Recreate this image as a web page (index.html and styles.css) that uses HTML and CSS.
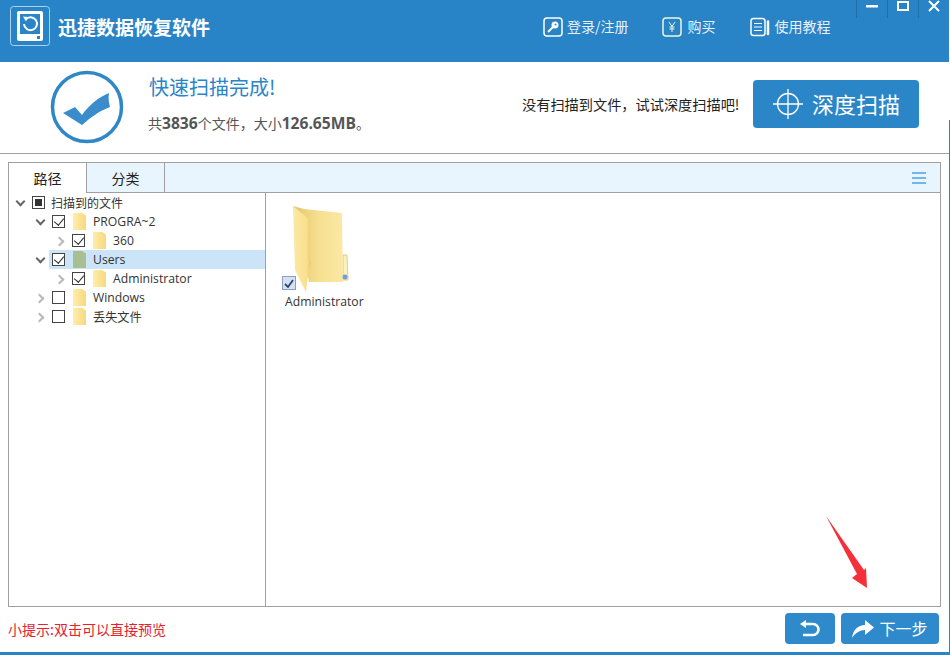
FILE: index.html
```html
<!DOCTYPE html>
<html lang="zh-CN">
<head>
<meta charset="utf-8">
<title>迅捷数据恢复软件</title>
<link rel="stylesheet" href="styles.css">
</head>
<body>
<div class="app">
  <header class="topbar">
    <svg class="logo" width="40" height="40" viewBox="0 0 40 40">
      <rect x=".5" y=".5" width="39" height="39" rx="3" fill="none" stroke="#a9d3f0"/>
      <path d="M9 5h22a2 2 0 0 1 2 2v26a2 2 0 0 1-2 2H9a2 2 0 0 1-2-2V7a2 2 0 0 1 2-2z" fill="#fff"/>
      <rect x="10" y="8" width="20" height="20" fill="#2a84c8"/>
      <path d="M15.5 13.5A6.5 6.5 0 1 1 14 18" fill="none" stroke="#fff" stroke-width="2"/>
      <path d="M13 10.500l5 .5-2 4.500z" fill="#fff"/>
      <rect x="27" y="30" width="3" height="3" fill="#2a84c8"/>
    </svg>
    <div class="apptitle">迅捷数据恢复软件</div>
    <nav class="nav">
      <div class="navitem">
        <svg width="20" height="20" viewBox="0 0 20 20"><rect x="1" y="1" width="18" height="18" rx="3" fill="none" stroke="#fff" stroke-width="1.500"/><circle cx="12" cy="8" r="3.500" fill="#fff"/><path d="M10 10l-5 5" stroke="#fff" stroke-width="2"/><circle cx="12.500" cy="7.500" r="1" fill="#2a84c8"/></svg>
        <span>登录/注册</span>
      </div>
      <div class="navitem nav-buy">
        <svg width="20" height="20" viewBox="0 0 20 20"><rect x="1" y="1" width="18" height="18" rx="3" fill="none" stroke="#eaf7d8" stroke-width="1.500"/><path d="M7 5l3 4.500L13 5M10 9.500V15M7.500 10h5M7.500 12h5" fill="none" stroke="#eaf7d8"/></svg>
        <span>购买</span>
      </div>
      <div class="navitem nav-guide">
        <svg width="20" height="20" viewBox="0 0 20 20"><rect x="1" y="1.500" width="14" height="17" rx="2.500" fill="none" stroke="#fff" stroke-width="1.500"/><path d="M4 6.500h8M4 10h8M4 13.500h8" stroke="#fff"/><path d="M18 4.500V17" stroke="#fff" stroke-width="2.500" stroke-linecap="round"/></svg>
        <span>使用教程</span>
      </div>
    </nav>
    <div class="winctl">
      <div class="winbtn"><svg width="12" height="12" viewBox="0 0 12 12"><rect y="5" width="12" height="2.500" fill="#fff"/></svg></div>
      <div class="winbtn"><svg width="12" height="12" viewBox="0 0 12 12"><rect x="1" y="2" width="10" height="8" fill="none" stroke="#fff" stroke-width="2"/></svg></div>
      <div class="winbtn"><svg width="12" height="12" viewBox="0 0 12 12"><path d="M1 1l10 10M11 1L1 11" stroke="#fff" stroke-width="2"/></svg></div>
    </div>
  </header>

  <section class="summary">
    <svg class="okicon" width="76" height="76" viewBox="0 0 76 76">
      <circle cx="38" cy="38" r="34.500" fill="#fff" stroke="#2f87c6" stroke-width="3.500"/>
      <path d="M14 44L26 38L33 46C40 36 50 28 60 24C59 30 60 34 61 38C50 42 41 49 33 56z" fill="#3b8cca"/>
    </svg>
    <div class="sumtext">
      <div class="sumtitle">快速扫描完成!</div>
      <div class="sumsub">共<b>3836</b>个文件，大小<b>126.65MB</b>。</div>
    </div>
    <div class="sumhint">没有扫描到文件，试试深度扫描吧!</div>
    <button class="deepbtn">
      <svg width="32" height="32" viewBox="0 0 32 32"><circle cx="16" cy="16" r="10.500" fill="none" stroke="#fff" stroke-width="1.300"/><path d="M1 16h30M16 1v30" stroke="#fff" stroke-width="1.300"/></svg>
      <span>深度扫描</span>
    </button>
  </section>

  <main class="panel">
    <div class="tabs">
      <div class="tab tab-on">路径</div>
      <div class="tab">分类</div>
      <div class="tabfill">
        <svg width="14" height="12" viewBox="0 0 14 12"><path d="M0 1h14M0 6h14M0 11h14" stroke="#72b6ea" stroke-width="2"/></svg>
      </div>
    </div>
    <div class="panes">
      <div class="tree">
        <div class="row lv0"><span class="chev open"></span><span class="cb cb-mixed"></span><span class="lbl lbl0">扫描到的文件</span></div>
        <div class="row lv1"><span class="chev open"></span><span class="cb cb-on"></span><span class="fold"></span><span class="lbl">PROGRA~2</span></div>
        <div class="row lv2"><span class="chev"></span><span class="cb cb-on"></span><span class="fold"></span><span class="lbl">360</span></div>
        <div class="row lv1 selected"><span class="chev open"></span><span class="cb cb-on"></span><span class="fold fold-sel"></span><span class="lbl">Users</span></div>
        <div class="row lv2"><span class="chev"></span><span class="cb cb-on"></span><span class="fold"></span><span class="lbl">Administrator</span></div>
        <div class="row lv1"><span class="chev"></span><span class="cb"></span><span class="fold"></span><span class="lbl">Windows</span></div>
        <div class="row lv1"><span class="chev"></span><span class="cb"></span><span class="fold"></span><span class="lbl">丢失文件</span></div>
      </div>
      <div class="files">
        <div class="fileitem">
          <svg class="bigfolder" width="57" height="88" viewBox="0 0 57 88">
            <defs>
              <linearGradient id="fb" x1="0" y1="0" x2="1" y2="0"><stop offset="0" stop-color="#e3c46c"/><stop offset=".5" stop-color="#f7df90"/><stop offset="1" stop-color="#fbe8a4"/></linearGradient>
              <linearGradient id="ff" x1="0" y1="0" x2="1" y2="0"><stop offset="0" stop-color="#fbe9a4"/><stop offset=".75" stop-color="#f9e08e"/><stop offset="1" stop-color="#e8c86e"/></linearGradient>
            </defs>
            <path d="M51 50h4l1 25H42V71h9z" fill="#fbf0c0" stroke="#e0c26a" stroke-width=".8"/>
            <path d="M1 1L12 4L50 8L51 77H17z" fill="url(#fb)"/>
            <circle cx="53" cy="72" r="2.500" fill="#6f9fd8"/>
            <path d="M1 1L17 14L18 55L19 58L16 70L14 87L3 65z" fill="url(#ff)"/>
          </svg>
          <span class="itemcheck"><svg width="10" height="9" viewBox="0 0 10 9"><path d="M1 5l3 3 5-7" fill="none" stroke="#2d4a6e" stroke-width="1.800"/></svg></span>
          <span class="itemname">Administrator</span>
        </div>
      </div>
    </div>
  </main>

  <footer class="foot">
    <div class="tip">小提示:双击可以直接预览</div>
    <div class="footbtns">
      <button class="fbtn fbtn-back">
        <svg width="22" height="18" viewBox="0 0 22 18"><path d="M5 4h9a5.500 5.500 0 0 1 0 11H4" fill="none" stroke="#fff" stroke-width="2.600"/><path d="M1 4l6-4v8z" fill="#fff"/></svg>
      </button>
      <button class="fbtn fbtn-next">
        <svg width="22" height="18" viewBox="0 0 22 18"><path d="M0 18C1 10 6 5 13 5V0l9 7.500-9 7.500v-5C8 10 3 13 0 18z" fill="#fff"/></svg>
        <span>下一步</span>
      </button>
    </div>
  </footer>
  <div class="bottombar"></div>

  <svg class="redarrow" width="44" height="74" viewBox="0 0 44 74"><path d="M1 1L39 55L41 53L42 73L27 63L32 59z" fill="#f5303a"/></svg>
</div>
<div class="edge"></div>
</body>
</html>
```

FILE: styles.css
```css
* { box-sizing: border-box; }
html, body { margin: 0; height: 100%; }
body {
  width: 950px;
  height: 655px;
  overflow: hidden;
  display: flex;
  background: #fff;
  font-family: "Open Sans", "Noto Sans CJK SC", sans-serif;
  color: #333;
}
.app {
  position: relative;
  flex: 0 0 949px;
  height: 655px;
  display: flex;
  flex-direction: column;
}
.edge {
  flex: 1;
  background: linear-gradient(#fff 0, #fff 120px, #2a84c8 120px);
}

.topbar {
  flex: 0 0 62px;
  display: flex;
  align-items: flex-start;
  background: #2883c7;
  color: #fff;
  padding-left: 10px;
}
.logo { margin-top: 6px; }
.apptitle {
  margin: 12px 0 0 8px;
  font-size: 19px;
  line-height: 30px;
  font-weight: 700;
  font-family: "Noto Sans CJK SC", sans-serif;
}
.nav {
  display: flex;
  margin: 17px 0 0 333px;
}
.navitem {
  display: flex;
  align-items: center;
  gap: 4px;
  height: 20px;
  font-size: 14px;
  font-family: "Noto Sans CJK SC", sans-serif;
  color: #e6f2fb;
}
.navitem span { margin-top: -2px; }
.nav-buy { margin-left: 33px; gap: 6px; }
.nav-guide { margin-left: 34px; gap: 5px; }
.winctl {
  display: flex;
  margin-left: auto;
}
.winbtn {
  width: 31px;
  height: 18px;
  border-left: 1px solid #1f6ea8;
  display: flex;
  align-items: center;
  justify-content: center;
  padding-bottom: 8px;
  padding-top: 2px;
}

.summary {
  flex: 0 0 92px;
  display: flex;
  align-items: flex-start;
  border-bottom: 1px solid #a0a0a0;
  padding-left: 49px;
}
.okicon { margin-top: 7px; }
.sumtext { margin-left: 24px; width: 373px; }
.sumtitle {
  margin-top: 10px;
  font-size: 20px;
  line-height: 30px;
  color: #2a84c8;
  font-family: "Noto Sans CJK SC", sans-serif;
}
.sumsub {
  margin-top: 9px;
  margin-left: -1px;
  font-size: 14px;
  line-height: 24px;
  color: #555;
}
.sumsub b { font-size: 15.600px; }
.sumhint {
  margin-top: 32px;
  font-size: 14.200px;
  line-height: 20px;
  color: #222;
  font-family: "Noto Sans CJK SC", sans-serif;
  width: 231px;
}
.deepbtn {
  margin-top: 18px;
  width: 166px;
  height: 48px;
  border: 0;
  border-radius: 4px;
  background: #2b86c8;
  color: #fff;
  display: flex;
  align-items: center;
  padding: 0 0 0 19px;
  gap: 8px;
  font-size: 22px;
  font-family: "Noto Sans CJK SC", sans-serif;
}
.deepbtn span { margin-top: -3px; }

.panel {
  margin: 8px 0 0 8px;
  width: 933px;
  height: 445px;
  border: 1px solid #a0a0a0;
  display: flex;
  flex-direction: column;
}
.tabs {
  flex: 0 0 30px;
  display: flex;
  border-bottom: 1px solid #a0a0a0;
  background: #e8f4fe;
}
.tab {
  width: 78px;
  border-right: 1px solid #a0a0a0;
  display: flex;
  align-items: center;
  justify-content: center;
  font-size: 14px;
  font-family: "Noto Sans CJK SC", sans-serif;
  color: #222;
}
.tab-on {
  background: #fff;
  margin-bottom: -1px;
}
.tabfill {
  flex: 1;
  display: flex;
  align-items: center;
  justify-content: flex-end;
  padding-right: 14px;
}

.panes { flex: 1; display: flex; min-height: 0; }
.tree {
  width: 257px;
  border-right: 1px solid #a0a0a0;
}
.row {
  height: 19px;
  display: flex;
  align-items: center;
  font-size: 12px;
  color: #333;
}
.lv0 { padding-left: 6px; }
.lv1 { padding-left: 26px; }
.lv2 { padding-left: 46px; }
.selected {
  background: #cce4f7;
  margin-left: 40px;
  padding-left: 0;
  position: relative;
}
.selected .chev { position: absolute; left: -14px; }
.selected .cb { margin-left: 3px; }
.chev {
  flex: 0 0 10px;
  width: 10px;
  height: 10px;
  margin-right: 7px;
  position: relative;
}
.chev::before {
  content: "";
  position: absolute;
  left: 1px;
  top: 2px;
  width: 5px;
  height: 5px;
  border-right: 2px solid #b8b8b8;
  border-bottom: 2px solid #b8b8b8;
  transform: rotate(-45deg);
}
.chev.open::before {
  left: 2px;
  top: 0;
  border-color: #666;
  transform: rotate(45deg);
}
.cb {
  flex: 0 0 13px;
  width: 13px;
  height: 13px;
  border: 1px solid #444;
  background: #fff;
  position: relative;
}
.cb-on::after {
  content: "";
  position: absolute;
  left: 3px;
  top: 0;
  width: 5px;
  height: 8px;
  border-right: 1px solid #333;
  border-bottom: 1px solid #333;
  transform: rotate(40deg);
}
.cb-mixed::after {
  content: "";
  position: absolute;
  left: 2px;
  top: 2px;
  width: 7px;
  height: 7px;
  background: #333;
}
.fold {
  flex: 0 0 13px;
  width: 13px;
  height: 17px;
  margin-left: 8px;
  background: linear-gradient(90deg, #ffeeaa, #f7d880);
  clip-path: polygon(0 0, 70% 0, 100% 15%, 100% 100%, 0 100%);
}
.fold-sel { background: #a8bf93; }
.lbl { margin-left: 7px; font-size: 12.200px; }
.lbl0 { margin-left: 6px; font-size: 12px; }

.files { flex: 1; padding: 12px 0 0 16px; }
.fileitem {
  position: relative;
  width: 84px;
  display: flex;
  flex-direction: column;
  align-items: flex-start;
}
.bigfolder { margin-left: 10px; }
.itemcheck {
  position: absolute;
  left: 0;
  top: 71px;
  width: 14px;
  height: 14px;
  border: 1px solid #8aa0c0;
  background: #d6e0f2;
  display: flex;
  align-items: center;
  justify-content: center;
}
.itemname {
  margin: 0 0 0 3px;
  font-size: 12.200px;
  line-height: 18px;
  color: #333;
}

.foot {
  flex: 1;
  display: flex;
  align-items: flex-start;
  padding: 6px 0 0 8px;
}
.tip {
  margin-top: 6px;
  font-size: 14px;
  line-height: 20px;
  color: #e8202c;
  font-family: "Noto Sans CJK SC", sans-serif;
  width: 777px;
}
.footbtns { display: flex; gap: 6px; }
.fbtn {
  height: 31px;
  border: 0;
  border-radius: 4px;
  background: #2f8acb;
  color: #fff;
  display: flex;
  align-items: center;
  justify-content: center;
  gap: 5px;
  padding: 0;
  font-size: 16px;
  font-family: "Noto Sans CJK SC", sans-serif;
}
.fbtn span { margin-top: -2px; }
.fbtn-back { width: 50px; }
.fbtn-next { width: 98px; }
.bottombar { flex: 0 0 3px; background: #2883c7; }

.redarrow { position: absolute; left: 825px; top: 515px; }
```
